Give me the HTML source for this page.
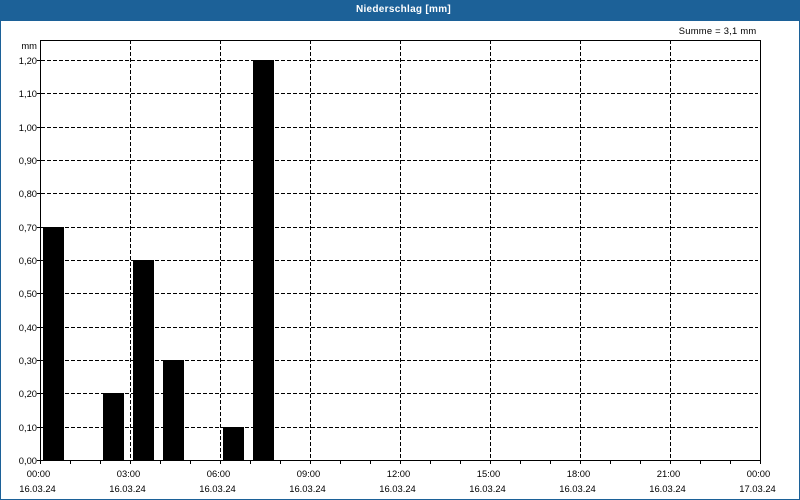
<!DOCTYPE html>
<html>
<head>
<meta charset="utf-8">
<style>
html,body{margin:0;padding:0;background:#fff;width:800px;height:500px;overflow:hidden}
svg{display:block}
text{font-family:"Liberation Sans",sans-serif;font-size:9.4px;fill:#000}
</style>
</head>
<body>
<svg width="800" height="500" viewBox="0 0 800 500" xmlns="http://www.w3.org/2000/svg">
<rect x="0" y="0" width="800" height="500" fill="#1c6198"/>
<rect x="1" y="21" width="798" height="478" fill="#fff"/>
<text x="403.5" y="12" text-anchor="middle" style="font-size:10px;font-weight:bold;fill:#fff;letter-spacing:.3px">Niederschlag [mm]</text>
<text x="756.5" y="34" text-anchor="end" style="letter-spacing:.25px">Summe = 3,1 mm</text>
<text x="37" y="49" text-anchor="end">mm</text>

<g stroke="#000" stroke-width="1" stroke-dasharray="4 2" fill="none" shape-rendering="crispEdges">
<path d="M41 60.5H758M41 93.5H758M41 127.5H758M41 160.5H758M41 193.5H758M41 227.5H758M41 260.5H758M41 293.5H758M41 327.5H758M41 360.5H758M41 393.5H758M41 427.5H758"/>
<path d="M130.5 40V460M220.5 40V460M310.5 40V460M400.5 40V460M490.5 40V460M580.5 40V460M670.5 40V460"/>
</g>

<g fill="#000" shape-rendering="crispEdges">
<rect x="43" y="227" width="21" height="233"/>
<rect x="103" y="393" width="21" height="67"/>
<rect x="133" y="260" width="21" height="200"/>
<rect x="163" y="360" width="21" height="100"/>
<rect x="223" y="427" width="21" height="33"/>
<rect x="253" y="60" width="21" height="400"/>
</g>

<g stroke="#000" stroke-width="1" fill="none" shape-rendering="crispEdges">
<path d="M40.5 40.5H760.5V460.5H40.5Z"/>
<path d="M37 60.5H41M37 93.5H41M37 127.5H41M37 160.5H41M37 193.5H41M37 227.5H41M37 260.5H41M37 293.5H41M37 327.5H41M37 360.5H41M37 393.5H41M37 427.5H41M37 460.5H41"/>
<path d="M40.5 460V464M70.5 460V464M100.5 460V464M130.5 460V464M160.5 460V464M190.5 460V464M220.5 460V464M250.5 460V464M280.5 460V464M310.5 460V464M340.5 460V464M370.5 460V464M400.5 460V464M430.5 460V464M460.5 460V464M490.5 460V464M520.5 460V464M550.5 460V464M580.5 460V464M610.5 460V464M640.5 460V464M670.5 460V464M700.5 460V464M730.5 460V464M760.5 460V464"/>
</g>

<g text-anchor="end">
<text x="37" y="64">1,20</text>
<text x="37" y="97">1,10</text>
<text x="37" y="131">1,00</text>
<text x="37" y="164">0,90</text>
<text x="37" y="197">0,80</text>
<text x="37" y="231">0,70</text>
<text x="37" y="264">0,60</text>
<text x="37" y="297">0,50</text>
<text x="37" y="331">0,40</text>
<text x="37" y="364">0,30</text>
<text x="37" y="397">0,20</text>
<text x="37" y="431">0,10</text>
<text x="37" y="464">0,00</text>
</g>

<g text-anchor="middle">
<text x="38.5" y="477">00:00</text><text x="37.5" y="492">16.03.24</text>
<text x="128.5" y="477">03:00</text><text x="127.5" y="492">16.03.24</text>
<text x="218.5" y="477">06:00</text><text x="217.5" y="492">16.03.24</text>
<text x="308.5" y="477">09:00</text><text x="307.5" y="492">16.03.24</text>
<text x="398.5" y="477">12:00</text><text x="397.5" y="492">16.03.24</text>
<text x="488.5" y="477">15:00</text><text x="487.5" y="492">16.03.24</text>
<text x="578.5" y="477">18:00</text><text x="577.5" y="492">16.03.24</text>
<text x="668.5" y="477">21:00</text><text x="667.5" y="492">16.03.24</text>
<text x="758.5" y="477">00:00</text><text x="757.5" y="492">17.03.24</text>
</g>
</svg>
</body>
</html>
